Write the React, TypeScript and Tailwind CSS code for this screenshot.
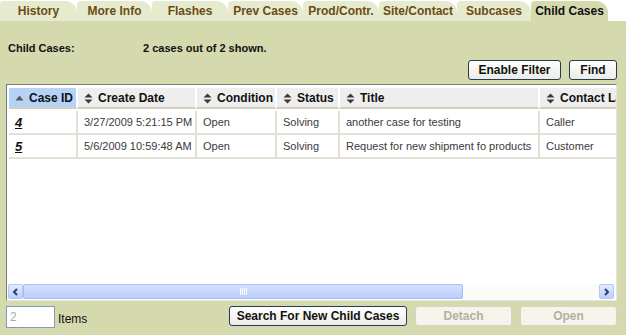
import React from 'react';

const tabs = [
  { label: 'History', w: 77 },
  { label: 'More Info', w: 75 },
  { label: 'Flashes', w: 76 },
  { label: 'Prev Cases', w: 75 },
  { label: 'Prod/Contr.', w: 76 },
  { label: 'Site/Contact', w: 78 },
  { label: 'Subcases', w: 74 },
  { label: 'Child Cases', w: 77, active: true },
];

const columns = [
  { label: 'Case ID', w: 69, sorted: true },
  { label: 'Create Date', w: 119 },
  { label: 'Condition', w: 80 },
  { label: 'Status', w: 63 },
  { label: 'Title', w: 200 },
  { label: 'Contact Last Name', w: 120 },
];

const rows = [
  ['4', '3/27/2009 5:21:15 PM', 'Open', 'Solving', 'another case for testing', 'Caller'],
  ['5', '5/6/2009 10:59:48 AM', 'Open', 'Solving', 'Request for new shipment fo products', 'Customer'],
];

function SortIcon({ up }: { up?: boolean }) {
  if (up) {
    return (
      <svg width="9" height="6" viewBox="0 0 9 6" className="shrink-0">
        <path d="M4.5 0.5 L8.5 5.5 L0.5 5.5 Z" fill="#5a5a5a" />
      </svg>
    );
  }
  return (
    <svg width="9" height="11" viewBox="0 0 9 11" className="shrink-0">
      <path d="M4.5 0.5 L8.5 4.5 L0.5 4.5 Z" fill="#3a3a3a" />
      <path d="M0.5 6.5 L8.5 6.5 L4.5 10.5 Z" fill="#3a3a3a" />
    </svg>
  );
}

function Button({ children, w, disabled }: { children: React.ReactNode; w: number; disabled?: boolean }) {
  return (
    <button
      className={
        disabled
          ? 'h-[20px] rounded-[3px] border border-[#d6d4c8] bg-[#f5f4ea] text-[12px] font-bold text-[#b3b0a0]'
          : 'h-[20px] rounded-[3px] border border-[#253a5c] bg-gradient-to-b from-white to-[#ecebe4] text-[12px] font-bold text-[#111]'
      }
      style={{ width: w }}
    >
      {children}
    </button>
  );
}

export default function App() {
  return (
    <div className="w-[626px] h-[335px] bg-white flex flex-col overflow-hidden font-['Liberation_Sans',Arial,sans-serif]">
      {/* Tabs */}
      <div className="flex h-[21px] items-end">
        {tabs.map((t) => (
          <div
            key={t.label}
            className={
              'h-[20px] flex items-center justify-center rounded-tl-[4px] rounded-tr-[12px] text-[12px] font-bold leading-none ' +
              (t.active ? 'bg-[#d4d9ae] text-[#111]' : 'bg-[#e6eacf] text-[#6a4c12]')
            }
            style={{ width: t.w }}
          >
            {t.label}
          </div>
        ))}
      </div>

      {/* Panel */}
      <div className="flex-1 bg-[#d4d9ae] pl-[6px] pr-[9px] flex flex-col">
        <div className="flex items-center h-[14px] mt-[20px] text-[11px] font-bold text-[#111]">
          <span className="pl-[2px] w-[137px]">Child Cases:</span>
          <span>2 cases out of 2 shown.</span>
        </div>

        <div className="flex justify-end gap-[8px] mt-[5px]">
          <Button w={93}>Enable Filter</Button>
          <Button w={48}>Find</Button>
        </div>

        {/* Grid */}
        <div className="mt-[4px] h-[217px] bg-white border-l border-t border-[#7a7a7a] border-r border-r-[#e4e4e4] border-b border-b-[#e4e4e4] flex flex-col overflow-hidden">
          <div className="flex pt-[3px] pl-[2px]">
            {columns.map((c) => (
              <div
                key={c.label}
                className={
                  'h-[21px] shrink-0 flex items-center gap-[5px] pl-[6px] pt-[1px] border-r-2 border-white border-b-2 border-b-[#d4cfbf] text-[12px] font-bold text-[#111] whitespace-nowrap overflow-hidden ' +
                  (c.sorted ? 'bg-[#b5d3f7]' : 'bg-[#eeeeee]')
                }
                style={{ width: c.w }}
              >
                <SortIcon up={c.sorted} />
                <span>{c.label}</span>
              </div>
            ))}
          </div>
          <div className="flex flex-col pl-[2px] pt-[2px]">
            {rows.map((r) => (
              <div key={r[0]} className="flex">
                {r.map((v, i) => (
                  <div
                    key={i}
                    className="h-[24px] shrink-0 flex items-center pl-[6px] pt-[1px] border-r-2 border-b-2 border-[#e3e0d6] text-[11px] text-[#3a3a3a] whitespace-nowrap overflow-hidden"
                    style={{ width: columns[i].w }}
                  >
                    {i === 0 ? (
                      <span className="text-[13px] font-bold italic underline text-[#111]">{v}</span>
                    ) : (
                      v
                    )}
                  </div>
                ))}
              </div>
            ))}
          </div>
          <div className="flex-1" />
          {/* Horizontal scrollbar */}
          <div className="flex h-[15px] mb-[1px] ml-[1px] mr-[2px]">
            <div className="w-[15px] h-full rounded-[2px] border border-[#b4c8f4] bg-gradient-to-b from-[#e3ebff] to-[#bccff9] flex items-center justify-center">
              <svg width="7" height="8" viewBox="0 0 7 8">
                <path d="M5 1 L2 4 L5 7" stroke="#2a3f73" strokeWidth="2" fill="none" />
              </svg>
            </div>
            <div className="flex-1 flex bg-[#fbfbf8]">
              <div className="w-[440px] h-full rounded-[2px] border border-[#a7bdf1] bg-gradient-to-b from-[#d4e0ff] to-[#bacdfa] flex items-center justify-center gap-[1px]">
                {[0, 1, 2, 3].map((i) => (
                  <div key={i} className="w-[1px] h-[7px] bg-white" />
                ))}
              </div>
            </div>
            <div className="w-[15px] h-full rounded-[2px] border border-[#b4c8f4] bg-gradient-to-b from-[#e3ebff] to-[#bccff9] flex items-center justify-center">
              <svg width="7" height="8" viewBox="0 0 7 8">
                <path d="M2 1 L5 4 L2 7" stroke="#2a3f73" strokeWidth="2" fill="none" />
              </svg>
            </div>
          </div>
        </div>

        {/* Bottom row */}
        <div className="flex items-start mt-[5px]">
          <input
            readOnly
            value="2"
            className="w-[49px] h-[22px] border border-[#7f9db9] bg-white px-[3px] text-[12px] text-[#aaa] outline-none"
          />
          <span className="ml-[3px] mt-[4px] text-[12px] text-[#111]">Items</span>
          <div className="flex-1" />
          <div className="flex gap-[8px]">
            <Button w={178}>Search For New Child Cases</Button>
            <Button w={97} disabled>Detach</Button>
            <Button w={97} disabled>Open</Button>
          </div>
        </div>
      </div>
    </div>
  );
}
